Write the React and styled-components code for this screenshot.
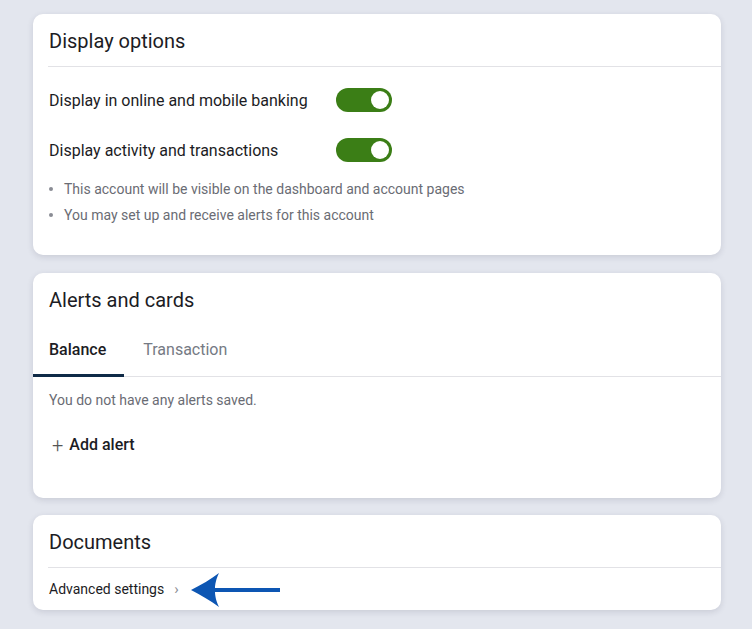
import React, { useState } from 'react'
import styled, { createGlobalStyle } from 'styled-components'

const Global = createGlobalStyle`
  body {
    margin: 0;
    background: #e3e6ee;
    font-family: Roboto, "Liberation Sans", Arial, sans-serif;
    color: #1c1c24;
  }
`

const Page = styled.div`
  padding: 14px 0 19px 33px;
  width: 688px;
  display: flex;
  flex-direction: column;
`

const Card = styled.section`
  background: #fff;
  border-radius: 10px;
  box-shadow: 0 2px 6px rgba(40, 45, 70, 0.14);
  margin-bottom: ${p => p.$gap || 0}px;
  padding-bottom: ${p => p.$pb || 0}px;
`

const Title = styled.h2`
  margin: 0;
  font-size: 20px;
  font-weight: 400;
  line-height: 24px;
  padding: 15px 16px 13px;
  color: #1c1c24;
`

const Divider = styled.div`
  height: 1px;
  background: #e2e2e6;
  margin-left: 15px;
`

const Rows = styled.div`
  padding: 13px 16px 0;
  display: flex;
  flex-direction: column;
  gap: 10px;
`

const Row = styled.div`
  display: flex;
  align-items: center;
  height: 40px;
`

const Label = styled.span`
  width: 287px;
  font-size: 16px;
  color: #1c1c24;
`

const Toggle = styled.button`
  width: 56px;
  height: 24px;
  border: none;
  padding: 0;
  border-radius: 12px;
  background: ${p => (p.$on ? '#3b7e16' : '#b5b8c0')};
  position: relative;
  cursor: pointer;
  &::after {
    content: '';
    position: absolute;
    top: 3px;
    left: ${p => (p.$on ? '35px' : '3px')};
    width: 18px;
    height: 18px;
    border-radius: 50%;
    background: #fff;
  }
`

const Bullets = styled.ul`
  list-style: none;
  margin: 6px 0 0;
  padding: 0 0 0 16px;
  font-size: 14px;
  line-height: 26px;
  color: #6a6c74;
`

const Bullet = styled.li`
  display: flex;
  align-items: center;
  gap: 11px;
  &::before {
    content: '';
    width: 4px;
    height: 4px;
    border-radius: 50%;
    background: #8a8c94;
  }
`

const Tabs = styled.div`
  display: flex;
  gap: 3px;
  border-bottom: 1px solid #e2e2e6;
`

const Tab = styled.button`
  background: none;
  border: none;
  font-family: inherit;
  font-size: 16px;
  line-height: 24px;
  padding: 13px 18px 12px 16px;
  margin-bottom: -1px;
  font-weight: ${p => (p.$active ? 500 : 400)};
  color: ${p => (p.$active ? '#1c1c24' : '#757a84')};
  border-bottom: 3px solid ${p => (p.$active ? '#0f2a47' : 'transparent')};
  cursor: pointer;
`

const Empty = styled.p`
  margin: 0;
  padding: 13px 16px 0;
  font-size: 14px;
  line-height: 20px;
  color: #6a6c74;
`

const AddButton = styled.button`
  display: flex;
  align-items: center;
  gap: 6px;
  background: none;
  border: none;
  margin: 25px 0 0 19px;
  padding: 0;
  font-family: inherit;
  font-size: 16px;
  font-weight: 500;
  line-height: 20px;
  color: #1c1c24;
  cursor: pointer;
  span {
    font-weight: 300;
    font-size: 20px;
    color: #555;
  }
`

const LinkRow = styled.div`
  display: flex;
  align-items: center;
  height: 42px;
  padding-left: 16px;
  font-size: 14px;
  color: #1c1c24;
`

const Chevron = styled.span`
  margin-left: 10px;
  color: #8a8d94;
  font-size: 15px;
`

const Pointer = styled.svg`
  margin-left: 12px;
  margin-top: 2px;
`

export default function App() {
  const [online, setOnline] = useState(true)
  const [activity, setActivity] = useState(true)
  const [tab, setTab] = useState('balance')

  return (
    <>
      <Global />
      <Page>
        <Card $gap={18} $pb={27}>
          <Title>Display options</Title>
          <Divider />
          <Rows>
            <Row>
              <Label>Display in online and mobile banking</Label>
              <Toggle $on={online} onClick={() => setOnline(!online)} />
            </Row>
            <Row>
              <Label>Display activity and transactions</Label>
              <Toggle $on={activity} onClick={() => setActivity(!activity)} />
            </Row>
          </Rows>
          <Bullets>
            <Bullet>This account will be visible on the dashboard and account pages</Bullet>
            <Bullet>You may set up and receive alerts for this account</Bullet>
          </Bullets>
        </Card>

        <Card $gap={17} $pb={43}>
          <Title>Alerts and cards</Title>
          <Tabs>
            <Tab $active={tab === 'balance'} onClick={() => setTab('balance')}>Balance</Tab>
            <Tab $active={tab === 'transaction'} onClick={() => setTab('transaction')}>Transaction</Tab>
          </Tabs>
          <Empty>You do not have any alerts saved.</Empty>
          <AddButton><span>+</span>Add alert</AddButton>
        </Card>

        <Card>
          <Title>Documents</Title>
          <Divider />
          <LinkRow>
            Advanced settings
            <Chevron>›</Chevron>
            <Pointer width="90" height="34" viewBox="0 0 90 34">
              <path d="M0 17 C10 12 20 6 28 0 C25 6 24 12 24 15 L89 15 L89 19 L24 19 C24 22 25 28 28 34 C20 28 10 22 0 17 Z" fill="#0d56b3" />
            </Pointer>
          </LinkRow>
        </Card>
      </Page>
    </>
  )
}
